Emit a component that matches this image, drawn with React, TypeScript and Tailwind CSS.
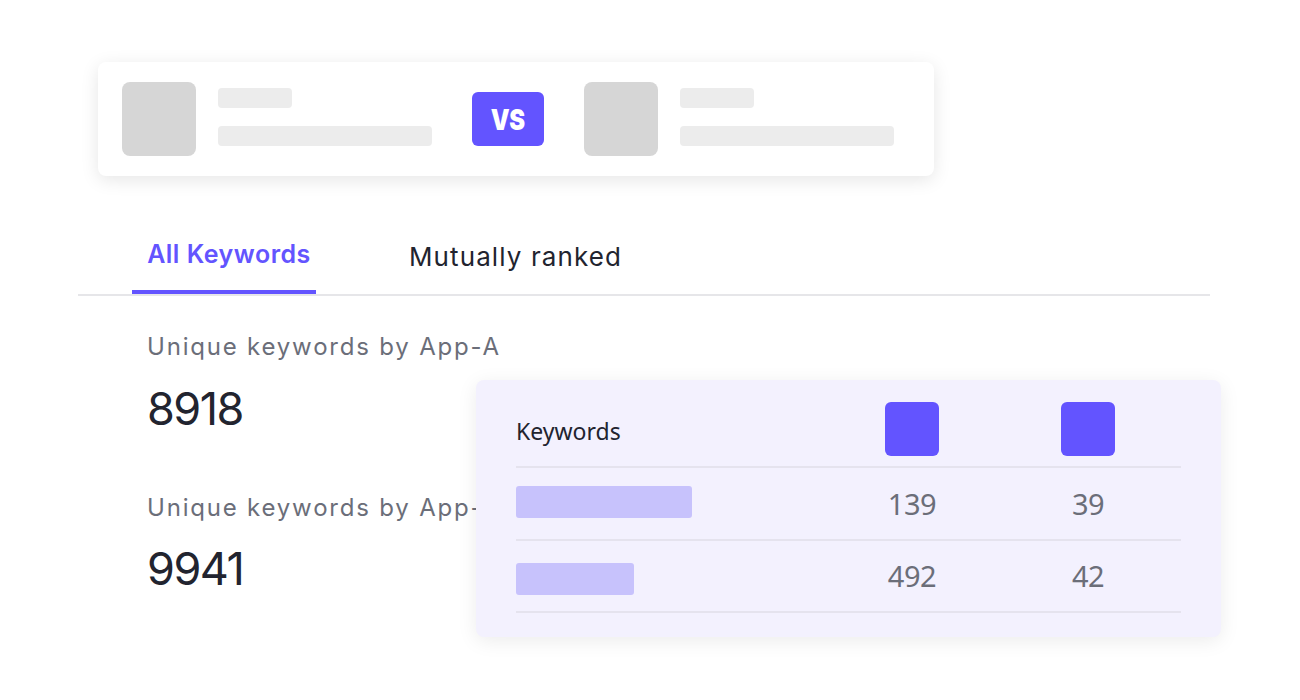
import React from 'react';

const Placeholder = () => (
  <div className="flex items-start gap-[22px]">
    <div className="w-[74px] h-[74px] rounded-[8px] bg-[#d6d6d6]" />
    <div className="mt-[6px] flex flex-col gap-[18px]">
      <div className="w-[74px] h-[20px] rounded-[4px] bg-[#ececec]" />
      <div className="w-[214px] h-[20px] rounded-[4px] bg-[#ececec]" />
    </div>
  </div>
);

const rows = [
  { h: 'h-[73px]', bar: 'w-[176px] -mt-[4px]', a: '139', b: '39' },
  { h: 'h-[72px]', bar: 'w-[118px] mt-[6px]', a: '492', b: '42' },
];

export default function App() {
  return (
    <div className="relative w-[1300px] h-[700px] bg-white overflow-hidden font-['Inter',sans-serif]">
      {/* Compare card */}
      <div className="ml-[98px] mt-[62px] w-[836px] h-[114px] rounded-[8px] bg-white shadow-[0_4px_18px_rgba(0,0,0,0.10)] flex items-center px-[24px]">
        <Placeholder />
        <div className="ml-[40px] w-[72px] h-[54px] rounded-[6px] bg-[#6354ff] flex items-center justify-center">
          <span className="text-white text-[29px] font-black tracking-[-0.5px] leading-none scale-x-[0.82]">VS</span>
        </div>
        <div className="ml-[40px]">
          <Placeholder />
        </div>
      </div>

      {/* Tabs */}
      <div className="ml-[78px] mt-[50px] w-[1132px] border-b-2 border-[#e6e6e9] flex h-[70px] items-stretch">
        <div className="ml-[54px] w-[184px] flex items-center justify-center border-b-4 border-[#6354ff] pb-[6px] pl-[10px] text-[25px] font-semibold text-[#6354ff] tracking-[0.5px]">
          All Keywords
        </div>
        <div className="ml-[93px] flex items-center pb-[8px] text-[26px] font-normal text-[#22242f] tracking-[1.1px]">
          Mutually ranked
        </div>
      </div>

      {/* Stats */}
      <div className="ml-[147px] mt-[35px] flex flex-col">
        <div className="text-[24px] text-[#6b6e79] font-normal leading-[32px] tracking-[1.8px]">Unique keywords by App-A</div>
        <div className="mt-[18px] text-[45px] text-[#22242f] leading-[56px] tracking-[-1.5px]">8918</div>
        <div className="mt-[55px] text-[24px] text-[#6b6e79] font-normal leading-[32px] tracking-[1.8px]">Unique keywords by App-B</div>
        <div className="mt-[17px] text-[45px] text-[#22242f] leading-[56px] tracking-[-1.5px]">9941</div>
      </div>

      {/* Keyword table card (overlay) */}
      <div className="absolute left-[476px] top-[380px] w-[745px] h-[257px] rounded-[8px] bg-[#f3f1fe] shadow-[0_4px_20px_rgba(0,0,0,0.08)] px-[40px] pt-[22px] font-['Noto_Sans',sans-serif]">
        <div className="flex items-center h-[54px] pb-[10px] box-content border-b-2 border-[#e5e3ee]">
          <div className="flex-1 text-[23px] text-[#22242f] pt-[4px]">Keywords</div>
          <div className="w-[54px] h-[54px] rounded-[6px] bg-[#6354ff]" />
          <div className="w-[122px]" />
          <div className="w-[54px] h-[54px] rounded-[6px] bg-[#6354ff] mr-[66px]" />
        </div>
        {rows.map((r) => (
          <div key={r.a} className={`flex items-center ${r.h} border-b-2 border-[#e5e3ee]`}>
            <div className="flex-1">
              <div className={`${r.bar} h-[32px] rounded-[3px] bg-[#c7c2fc]`} />
            </div>
            <div className="w-[90px] text-center text-[29px] text-[#6b6e79] tracking-[-0.5px]">{r.a}</div>
            <div className="w-[86px]" />
            <div className="w-[90px] text-center text-[29px] text-[#6b6e79] tracking-[-0.5px] mr-[48px]">{r.b}</div>
          </div>
        ))}
      </div>
    </div>
  );
}
